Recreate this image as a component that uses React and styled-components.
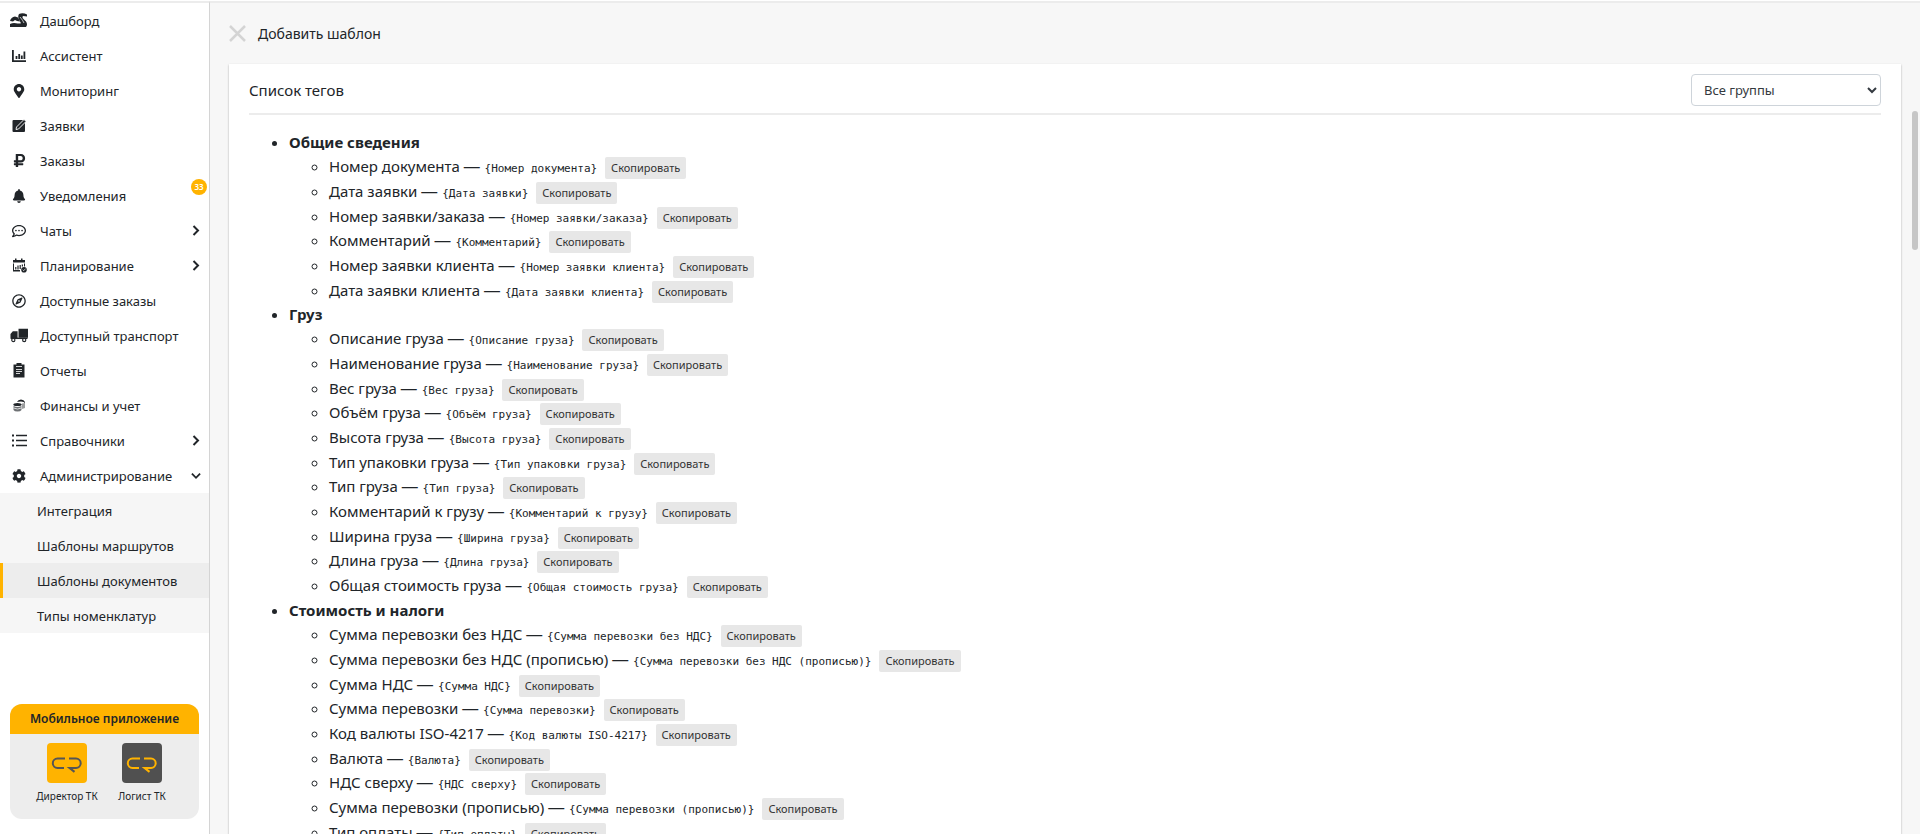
import React from 'react';
import styled, { createGlobalStyle, css } from 'styled-components';
import { FaMapMarkerAlt, FaRubleSign, FaBell, FaRegCompass, FaCog, FaRegCommentDots } from 'react-icons/fa';

const GlobalStyle = createGlobalStyle`
  * { box-sizing: border-box; }
  html, body, #root { height: 100%; }
  body {
    margin: 0;
    color: #212529;
    background: #f7f7f7;
    font-family: "Noto Sans", "Open Sans", sans-serif;
    font-size: 15px;
    line-height: 24px;
  }
  ul { margin: 0; }
`;

const Page = styled.div`
  display: flex;
  height: 100vh;
  overflow: hidden;
  border-top: 1px solid #fff;
`;

const Sidebar = styled.aside`
  display: flex;
  flex-direction: column;
  flex: 0 0 210px;
  background: #fff;
  border-top: 2px solid #ececec;
  border-right: 1px solid #d4d4d4;
`;

const NavList = styled.ul`
  list-style: none;
  padding: 0;
`;

const NavLink = styled.a`
  display: flex;
  align-items: center;
  position: relative;
  height: 35px;
  padding: 0 8px 0 10px;
  color: #212529;
  font-size: 13px;
  text-decoration: none;
  white-space: nowrap;
`;

const NavIcon = styled.span`
  display: flex;
  justify-content: center;
  width: 18px;
  margin-right: 12px;
`;

const NavLabel = styled.span`
  flex: 1;
`;

const ChevronBox = styled.span`
  display: flex;
  justify-content: center;
  width: 10px;
`;

const Badge = styled.span`
  position: absolute;
  top: 1px;
  right: 2px;
  width: 16px;
  border-radius: 8px;
  background: #ffb300;
  color: #fff;
  font-size: 8px;
  font-weight: 600;
  line-height: 16px;
  text-align: center;
`;

const SubList = styled(NavList)`
  background: #f6f6f6;
`;

const SubLink = styled(NavLink)`
  padding-left: 34px;
  border-left: 3px solid transparent;
  ${({ $active }) => $active && css`
    background: #ededed;
    border-left-color: #ffb300;
  `}
`;

const MobileCard = styled.section`
  margin: auto 10px 15px;
  height: 115px;
  border-radius: 12px;
  overflow: hidden;
  background: #ededed;
`;

const MobileTitle = styled.h2`
  margin: 0;
  background: #ffb300;
  font-size: 12px;
  font-weight: 600;
  line-height: 30px;
  text-align: center;
`;

const AppRow = styled.div`
  display: flex;
  justify-content: center;
  padding-top: 9px;
`;

const AppLink = styled.a`
  display: flex;
  flex-direction: column;
  align-items: center;
  gap: 4px;
  width: 75px;
  color: #212529;
  font-size: 10px;
  line-height: 18px;
  text-decoration: none;
  white-space: nowrap;
`;

const Main = styled.main`
  position: relative;
  display: flex;
  flex-direction: column;
  flex: 1;
  min-width: 0;
  padding: 0 19px;
  border-top: 2px solid #ececec;
`;

const PageHeader = styled.header`
  display: flex;
  align-items: center;
  gap: 12px;
  height: 61px;
  flex: none;
`;

const CloseButton = styled.button`
  display: flex;
  padding: 0;
  border: 0;
  background: none;
  color: #d4d4d4;
`;

const PageTitle = styled.h1`
  margin: 0;
  font-size: 14px;
  font-weight: 400;
`;

const Card = styled.section`
  flex: 1;
  min-height: 0;
  overflow: hidden;
  padding: 0 20px;
  background: #fff;
  box-shadow: 0 1px 2px rgba(0, 0, 0, 0.3);
`;

const CardHeader = styled.div`
  display: flex;
  justify-content: space-between;
  align-items: center;
  height: 51px;
  padding-top: 2px;
  border-bottom: 2px solid #ececec;
`;

const CardTitle = styled.h2`
  margin: 0;
  font-size: 15px;
  font-weight: 400;
`;

const GroupSelect = styled.select`
  width: 190px;
  height: 32px;
  padding: 0 0 0 8px;
  border: 1px solid #ced4da;
  border-radius: 4px;
  background: #fff;
  color: #343a40;
  font: 13px "Noto Sans", sans-serif;
`;

const GroupList = styled.ul`
  padding: 15px 0 0 40px;
`;

const TagList = styled.ul`
  padding-left: 40px;
`;

const Tag = styled.li`
  line-height: 25px;
  white-space: nowrap;
  &:nth-child(3n) { line-height: 24px; }
`;

const Dash = styled.span`
  margin-right: 1px;
  font-family: "Liberation Sans", sans-serif;
  font-size: 16px;
  line-height: 1;
`;

const TagCode = styled.code`
  font-family: "DejaVu Sans Mono", monospace;
  font-size: 11px;
  line-height: 1;
`;

const CopyButton = styled.button`
  margin: -2px 0 -2px 4px;
  padding: 2px 6px;
  border: 0;
  border-radius: 2px;
  background: #e7e7e7;
  color: #333;
  font: 11px/18px "Noto Sans", sans-serif;
  vertical-align: middle;
`;

const ScrollThumb = styled.div`
  position: absolute;
  top: 108px;
  right: 2px;
  width: 6px;
  height: 139px;
  border-radius: 3px;
  background: #c6c6c6;
`;

const DashboardIcon = () => (
  <svg width="18" height="15" viewBox="0 0 18 15" fill="currentColor">
    <path d="M0 8q1-4 5-4.500l3 1 2 4-3-.500L5 7 3 8.500z" />
    <path d="M0 11q3-1.500 6-.800t5 0L9 6.500q-1.500-3 0-5.500 4-1.500 8 .500v2l-4-.500q-1 1 0 2.500l3 3q2 3 0 5.500H0z" />
    <path d="M10 4q3 3.500 4 6" fill="none" stroke="#fff" strokeWidth=".700" />
  </svg>
);

const ChartIcon = () => (
  <svg width="14" height="14" viewBox="0 0 14 14" fill="none" stroke="currentColor" strokeWidth="1.800">
    <path d="M.900 1v11.200H14M4.500 10V7M7.200 10V5M9.800 10V6.500M12.400 10V2.500" />
  </svg>
);

const EditIcon = () => (
  <svg width="15" height="15" viewBox="0 0 15 15">
    <path d="M1.500 2H13v11q0 1-1 1H1.500q-1 0-1-1V3q0-1 1-1z" fill="currentColor" />
    <path d="M4 11.500 4.500 9 12 1.500l2 2L6.500 11z" fill="currentColor" stroke="#fff" strokeWidth=".900" />
  </svg>
);

const PlanIcon = () => (
  <svg width="15" height="15" viewBox="0 0 15 15" fill="currentColor">
    <path d="M1 2h2V.500h1.500V2h4.500V.500h1.500V2H13v2.500H1zM1 5.500h1V12h6v1.500H1zM12 5.500h1v3h-1z" />
    <path d="M3.800 11.500V9M6 11.500V7.500M8.200 11V7M10.400 8.500V6.500" stroke="currentColor" strokeWidth="1.200" />
    <circle cx="12" cy="11.700" r="2.800" />
    <path d="m10.700 11.700 1 1 1.800-2" fill="none" stroke="#fff" strokeWidth=".700" />
  </svg>
);

const TruckIcon = () => (
  <svg width="19" height="15" viewBox="0 0 19 15">
    <path d="M9 .500h10V10H9zM3 3h5v8H.500V6z" fill="currentColor" />
    <path d="M1 10.500h17.500" stroke="currentColor" strokeWidth="1.500" />
    <g fill="#fff" stroke="currentColor" strokeWidth="1.200">
      <circle cx="3.500" cy="12.300" r="1.700" />
      <circle cx="15" cy="12.300" r="1.700" />
    </g>
  </svg>
);

const ReportIcon = () => (
  <svg width="12" height="15" viewBox="0 0 12 15">
    <path d="M.500 1.500h11v13H.500z" fill="currentColor" />
    <path d="M3.500 0h5v3h-5z" fill="currentColor" />
    <path d="M3 3.500h6M3 6.500h6M3 8.500h6M3 10.500h4" stroke="#fff" strokeWidth=".800" />
  </svg>
);

const CoinsIcon = () => (
  <svg width="12" height="13" viewBox="0 0 12 13" fill="currentColor">
    <path d="M4 3q1-2.500 4-2.500T12 3v1q-1-1.500-4-1.500T4 3z" />
    <path d="M9 4.500q2 0 3-1V9l-3 1z" opacity=".45" />
    <ellipse cx="4.500" cy="5.500" rx="4.200" ry="1.600" />
    <path d="M.500 7q4 2 8 0v4q-1 1.500-4 1.500T.500 11z" opacity=".65" />
    <path d="M.500 9q4 2 8 0" fill="none" stroke="#fff" strokeWidth=".700" />
  </svg>
);

const ListIcon = () => (
  <svg width="15" height="13" viewBox="0 0 15 13" stroke="currentColor" strokeWidth="1.500">
    <path d="M0 1.500h2M0 6.500h2M0 11.500h2" strokeWidth="2" />
    <path d="M4 1.500h11M4 6.500h11M4 11.500h11" />
  </svg>
);

const Chevron = ({ down }) => (
  <svg width={down ? 11 : 8} height={down ? 8 : 11} viewBox={down ? '0 0 11 8' : '0 0 8 11'} fill="none" stroke="currentColor" strokeWidth="2">
    <path d={down ? 'm1 1.500 4.500 4.500L10 1.500' : 'm1.500 1 4.500 4.500L1.500 10'} />
  </svg>
);

const CrLogo = ({ background, color }) => (
  <svg width="40" height="40" viewBox="0 0 40 40">
    <rect width="40" height="40" rx="4" fill={background} />
    <g fill="none" stroke={color} strokeWidth="2">
      <path d="M18 15.500h-7.500a4.700 4.700 0 0 0 0 9.400H17M22 15.500h7a4.700 4.700 0 0 1 0 9.400H22.500l5 4" />
    </g>
  </svg>
);

const navItems = [
  ['Дашборд', <DashboardIcon />],
  ['Ассистент', <ChartIcon />],
  ['Мониторинг', <FaMapMarkerAlt size={14} />],
  ['Заявки', <EditIcon />],
  ['Заказы', <FaRubleSign size={15} />],
  ['Уведомления', <FaBell size={14} />, 'badge'],
  ['Чаты', <FaRegCommentDots size={14} />, 'right'],
  ['Планирование', <PlanIcon />, 'right'],
  ['Доступные заказы', <FaRegCompass size={14} />],
  ['Доступный транспорт', <TruckIcon />],
  ['Отчеты', <ReportIcon />],
  ['Финансы и учет', <CoinsIcon />],
  ['Справочники', <ListIcon />, 'right'],
  ['Администрирование', <FaCog size={14} />, 'down'],
];

const subItems = ['Интеграция', 'Шаблоны маршрутов', 'Шаблоны документов', 'Типы номенклатур'];

const groups = [
  ['Общие сведения', ['Номер документа', 'Дата заявки', 'Номер заявки/заказа', 'Комментарий', 'Номер заявки клиента', 'Дата заявки клиента']],
  ['Груз', ['Описание груза', 'Наименование груза', 'Вес груза', 'Объём груза', 'Высота груза', 'Тип упаковки груза', 'Тип груза', 'Комментарий к грузу', 'Ширина груза', 'Длина груза', 'Общая стоимость груза']],
  ['Стоимость и налоги', ['Сумма перевозки без НДС', 'Сумма перевозки без НДС (прописью)', 'Сумма НДС', 'Сумма перевозки', 'Код валюты ISO-4217', 'Валюта', 'НДС сверху', 'Сумма перевозки (прописью)', 'Тип оплаты']],
];

export default function App() {
  return (
    <Page>
      <GlobalStyle />
      <Sidebar>
        <nav>
          <NavList>
            {navItems.map(([label, icon, extra]) => (
              <li key={label}>
                <NavLink href="#">
                  <NavIcon>{icon}</NavIcon>
                  <NavLabel>{label}</NavLabel>
                  {extra === 'badge' && <Badge>33</Badge>}
                  {(extra === 'right' || extra === 'down') && (
                    <ChevronBox><Chevron down={extra === 'down'} /></ChevronBox>
                  )}
                </NavLink>
              </li>
            ))}
          </NavList>
          <SubList>
            {subItems.map((label) => (
              <li key={label}>
                <SubLink href="#" $active={label === 'Шаблоны документов'}>{label}</SubLink>
              </li>
            ))}
          </SubList>
        </nav>
        <MobileCard>
          <MobileTitle>Мобильное приложение</MobileTitle>
          <AppRow>
            <AppLink href="#"><CrLogo background="#ffb300" color="#555" />Директор ТК</AppLink>
            <AppLink href="#"><CrLogo background="#505050" color="#ffb300" />Логист ТК</AppLink>
          </AppRow>
        </MobileCard>
      </Sidebar>
      <Main>
        <PageHeader>
          <CloseButton aria-label="Закрыть">
            <svg width="17" height="17" viewBox="0 0 17 17" fill="none" stroke="currentColor" strokeWidth="2.500">
              <path d="m1 1 15 15M16 1 1 16" />
            </svg>
          </CloseButton>
          <PageTitle>Добавить шаблон</PageTitle>
        </PageHeader>
        <Card>
          <CardHeader>
            <CardTitle>Список тегов</CardTitle>
            <GroupSelect aria-label="Группа тегов">
              <option>Все группы</option>
              {groups.map(([name]) => <option key={name}>{name}</option>)}
            </GroupSelect>
          </CardHeader>
          <GroupList>
            {groups.map(([name, tags]) => (
              <li key={name}>
                <strong>{name}</strong>
                <TagList>
                  {tags.map((tag) => (
                    <Tag key={tag}>
                      {tag} <Dash>—</Dash> <TagCode>{`{${tag}}`}</TagCode> <CopyButton>Скопировать</CopyButton>
                    </Tag>
                  ))}
                </TagList>
              </li>
            ))}
          </GroupList>
        </Card>
        <ScrollThumb />
      </Main>
    </Page>
  );
}
